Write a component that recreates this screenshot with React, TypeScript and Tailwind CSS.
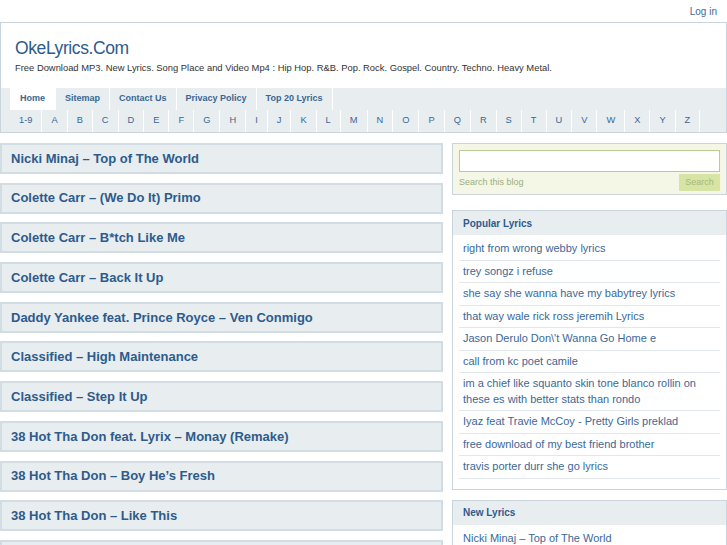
const tabs = ["Home", "Sitemap", "Contact Us", "Privacy Policy", "Top 20 Lyrics"];
const letters = ["1-9", ..."ABCDEFGHIJKLMNOPQRSTUVWXYZ".split("")];

const posts = [
  "Nicki Minaj – Top of The World",
  "Colette Carr – (We Do It) Primo",
  "Colette Carr – B*tch Like Me",
  "Colette Carr – Back It Up",
  "Daddy Yankee feat. Prince Royce – Ven Conmigo",
  "Classified – High Maintenance",
  "Classified – Step It Up",
  "38 Hot Tha Don feat. Lyrix – Monay (Remake)",
  "38 Hot Tha Don – Boy He’s Fresh",
  "38 Hot Tha Don – Like This",
  "38 Hot Tha Don – Shake It",
];

const popular = [
  "right from wrong webby lyrics",
  "trey songz i refuse",
  "she say she wanna have my babytrey lyrics",
  "that way wale rick ross jeremih Lyrics",
  "Jason Derulo Don\\'t Wanna Go Home e",
  "call from kc poet camile",
  "im a chief like squanto skin tone blanco rollin on these es with better stats than rondo",
  "Iyaz feat Travie McCoy - Pretty Girls preklad",
  "free download of my best friend brother",
  "travis porter durr she go lyrics",
];

export default function App() {
  return (
    <div className="h-[545px] overflow-hidden bg-white font-['Liberation_Sans',Arial,sans-serif] text-[#333]">
      {/* top bar */}
      <div className="flex h-[22px] items-center justify-end pr-[10px] text-[10px] text-[#3d6a98]">
        Log in
      </div>

      {/* header */}
      <div className="border border-[#c9d4dc]">
        <div className="px-[14px] pt-[15px]">
          <h1 className="text-[17.5px] leading-[20px] tracking-[-0.4px] text-[#2d5b8c]">OkeLyrics.Com</h1>
          <p className="mt-[4px] text-[9.4px] leading-[11px] text-[#333]">
            Free Download MP3. New Lyrics. Song Place and Video Mp4 : Hip Hop. R&amp;B. Pop. Rock. Gospel. Country. Techno. Heavy Metal.
          </p>
        </div>
        <div className="mt-[15px] bg-[#e8edf0] pl-[9px]">
          <div className="flex h-[22px]">
            {tabs.map((t, i) => (
              <div
                key={t}
                className={`flex items-center border-r border-white px-[9px] text-[9px] font-bold text-[#3a6694] ${
                  i === 0 ? "bg-white px-[10px]" : ""
                }`}
              >
                {t}
              </div>
            ))}
          </div>
          <div className="flex h-[22px]">
            {letters.map((l) => (
              <div
                key={l}
                className="flex items-center justify-center border-r border-white px-[9px] text-[9.3px] text-[#3a6694]"
              >
                {l}
              </div>
            ))}
          </div>
        </div>
      </div>

      {/* body */}
      <div className="mt-[10px] flex gap-[9px]">
        <div className="flex w-[443px] shrink-0 flex-col gap-[8.7px]">
          {posts.map((p) => (
            <div
              key={p}
              className="flex h-[31px] shrink-0 items-center border-2 border-[#d2dce3] bg-[#e8edf0] pl-[9px] text-[13px] font-bold text-[#2d5b8c]"
            >
              {p}
            </div>
          ))}
        </div>

        <div className="flex flex-1 flex-col">
          {/* search */}
          <div className="border border-[#c9d4dc] bg-[#f4f7e6] px-[6px] pb-[3px] pt-[6px]">
            <div className="h-[22px] border border-[#b9cd93] bg-white" />
            <div className="mt-[2px] flex items-center justify-between">
              <span className="text-[9px] text-[#9bae7e]">Search this blog</span>
              <span className="flex h-[17px] w-[41px] items-center justify-center bg-[#d7e4a3] text-[9px] text-[#a6b97c]">
                Search
              </span>
            </div>
          </div>

          {/* popular */}
          <div className="mt-[15px] border border-[#c9d4dc] pb-[10px]">
            <div className="flex h-[24px] items-center bg-[#e8edf0] pl-[10px] text-[10px] font-bold text-[#2d5b8c]">
              Popular Lyrics
            </div>
            <ul className="mx-[6px] mt-[3px]">
              {popular.map((p) => (
                <li
                  key={p}
                  className="border-b border-[#e2e7eb] px-[4px] py-[3px] text-[11px] leading-[15.5px] text-[#3b6897]"
                >
                  {p}
                </li>
              ))}
            </ul>
          </div>

          {/* new */}
          <div className="mt-[10px] border border-[#c9d4dc]">
            <div className="flex h-[24px] items-center bg-[#e8edf0] pl-[10px] text-[10px] font-bold text-[#2d5b8c]">
              New Lyrics
            </div>
            <ul className="mx-[6px] mt-[3px]">
              <li className="px-[4px] py-[3px] text-[11px] leading-[15.5px] text-[#3b6897]">
                Nicki Minaj – Top of The World
              </li>
            </ul>
          </div>
        </div>
      </div>
    </div>
  );
}
